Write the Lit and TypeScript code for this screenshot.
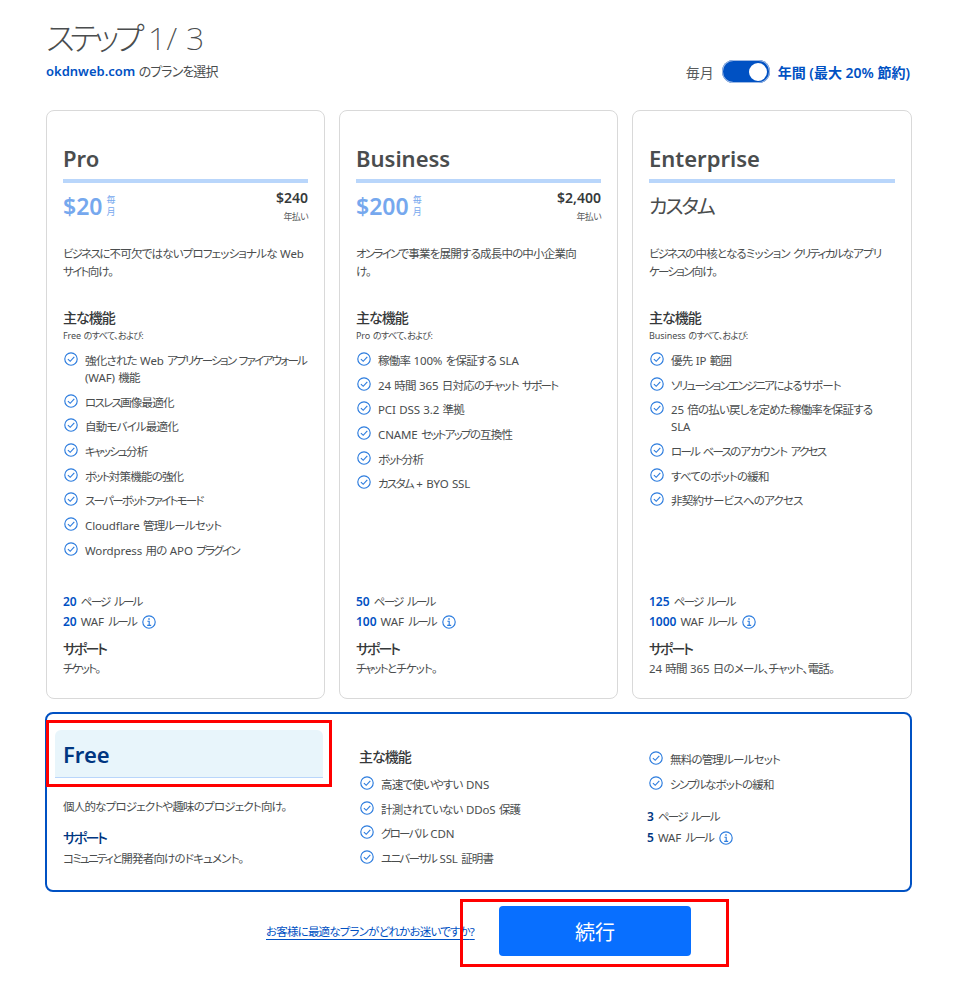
import { LitElement, html, css } from "lit";
import { customElement } from "lit/decorators.js";

const check = html`<svg class="ic" viewBox="0 0 14 14" fill="none" stroke="#2c7cde" stroke-width="1.15"><circle cx="7" cy="7" r="6.2"/><path d="M3.9 7.1 L6.2 9.3 L10.3 4.9"/></svg>`;
const info = html`<svg class="info" viewBox="0 0 14 14" fill="none" stroke="#2c7cde" stroke-width="1.15"><circle cx="7" cy="7" r="6.2"/><path d="M5.4 6.2H7.2V10.4M5.2 10.4H9.2"/><path d="M7 3.2V4.8" stroke-width="1.5"/></svg>`;

/** Wraps katakana and other CJK runs so each can take its own tracking. */
function jp(text: string) {
  const parts = text.match(/[ァ-ヶー]+|[\u3000-\u30ff\u4e00-\u9fff]+|[^\u3000-\u30ff\u4e00-\u9fff]+/g) ?? [];
  return parts.map((p) => {
    if (/^[ァ-ヶー]/.test(p)) return html`<span class="k">${p}</span>`;
    if (/^[\u3000-\u30ff\u4e00-\u9fff]/.test(p)) return html`<span class="c">${p}</span>`;
    return html`<span class="l">${p}</span>`;
  });
}

interface Plan { name: string; price?: string; year?: string; custom?: string; desc: string; from: string; feats: string[]; r1: string; r2: string; support: string; }

const plans: Plan[] = [
  { name: "Pro", price: "$20", year: "$240", desc: "ビジネスに不可欠ではないプロフェッショナルな Web サイト向け。", from: "Free のすべて、および:",
    feats: ["強化された Web アプリケーション ファイアウォール\n(WAF) 機能", "ロスレス画像最適化", "自動モバイル最適化", "キャッシュ分析", "ボット対策機能の強化", "スーパーボットファイトモード", "Cloudflare 管理ルールセット", "Wordpress 用の APO プラグイン"],
    r1: "20", r2: "20", support: "チケット。" },
  { name: "Business", price: "$200", year: "$2,400", desc: "オンラインで事業を展開する成長中の中小企業向\nけ。", from: "Pro のすべて、および:",
    feats: ["稼働率 100% を保証する SLA", "24 時間 365 日対応のチャット サポート", "PCI DSS 3.2 準拠", "CNAME セットアップの互換性", "ボット分析", "カスタム + BYO SSL"],
    r1: "50", r2: "100", support: "チャットとチケット。" },
  { name: "Enterprise", custom: "カスタム", desc: "ビジネスの中核となるミッション クリティカルなアプリ\nケーション向け。", from: "Business のすべて、および:",
    feats: ["優先 IP 範囲", "ソリューションエンジニアによるサポート", "25 倍の払い戻しを定めた稼働率を保証する\nSLA", "ロール ベースのアカウント アクセス", "すべてのボットの緩和", "非契約サービスへのアクセス"],
    r1: "125", r2: "1000", support: "24 時間 365 日のメール、チャット、電話。" },
];

@customElement("app-root")
export class AppRoot extends LitElement {
  static styles = css`
    :host { display: block; height: 989px; position: relative; overflow: hidden; background: #fff; color: #4a4d4e;
      font-family: "Noto Sans", "Noto Sans CJK JP", sans-serif; font-size: 11.5px; font-feature-settings: "palt"; }
    .k { letter-spacing: -0.15em; }
    .c { letter-spacing: -0.07em; }
    .l { letter-spacing: -0.01em; word-spacing: 0.5px; white-space: pre-line; }
    .page { width: 866px; padding: 20px 0 0 46px; }
    .head { display: flex; justify-content: space-between; align-items: flex-end; height: 90px; box-sizing: border-box; }
    .lead { align-self: flex-start; }
    h1 { margin: 0; font-size: 32px; font-weight: 200; line-height: 36px; color: #4a4d4e; }
    h1 .k { letter-spacing: -0.15em; }
    h1 .l { letter-spacing: 0.01em; word-spacing: 0; }
    .sub { font-size: 13px; line-height: 18px; margin-top: 6px; }
    .sub b { color: #0051c3; font-weight: 600; }
    .toggle { display: flex; align-items: center; gap: 8px; font-size: 14px; margin-bottom: 27px; margin-right: 2px; }
    .toggle .c, .toggle .l { letter-spacing: 0; word-spacing: 0; }
    .toggle .off { color: #595b5c; }
    .toggle .on { color: #0051c3; font-weight: 600; }
    .sw { width: 48px; height: 23px; border-radius: 12px; background: #0051c3; box-shadow: 0 0 0 1px #9db9e4 inset; display: flex; justify-content: flex-end; align-items: center; padding-right: 3px; box-sizing: border-box; }
    .sw i { width: 18px; height: 18px; background: #fff; border-radius: 50%; display: block; }
    .cards { display: grid; grid-template-columns: 279px 279px 280px; gap: 14px; }
    .card { height: 589px; box-sizing: border-box; border: 1px solid #d9d9d9; border-radius: 8px; padding: 29px 16px 0; display: flex; flex-direction: column; }
    .name { font-size: 22px; font-weight: 600; line-height: 36px; color: #4a4d4e; height: 39px; border-bottom: 4px solid #b9d6fb; }
    .price { display: flex; justify-content: space-between; height: 62px; padding-top: 3px; box-sizing: border-box; }
    .amt { display: flex; align-items: center; gap: 4px; height: 40px; color: #76a8ee; font-size: 23px; font-weight: 600; }
    .per { font-size: 9px; line-height: 12px; font-weight: 400; width: 9px; }
    .yr { text-align: right; }
    .yr b { display: block; font-size: 14px; font-weight: 600; line-height: 20px; margin-top: 2px; color: #36393a; }
    .yr span { font-size: 9px; line-height: 14px; display: block; color: #595b5c; margin-top: 2px; }
    .custom { font-size: 20px; line-height: 36px; height: 62px; color: #4a4d4e; padding-top: 6px; box-sizing: border-box; }
    .custom .k { letter-spacing: -0.1em; }
    .desc { line-height: 18px; height: 64px; margin: 0; }
    .ttl { font-size: 14px; font-weight: 500; line-height: 18px; color: #36393a; }
    .from { font-size: 9px; line-height: 14px; margin-bottom: 9px; margin-top: 2px; }
    ul { list-style: none; margin: 0; padding: 0; display: flex; flex-direction: column; gap: 7.7px; }
    li { display: flex; gap: 7px; line-height: 17px; color: #4a4d4e; }
    .ic { width: 14px; height: 14px; flex: none; margin: 0 0 0 1px; }
    .info { width: 14px; height: 14px; margin-left: 3px; vertical-align: -3px; }
    .rules { line-height: 20px; color: #4a4d4e; }
    .rules .l { word-spacing: 1.5px; }
    .rules b { color: #0051c3; font-weight: 600; margin-right: 1px; font-size: 12px; }
    .bottom { margin-top: auto; padding-bottom: 20px; }
    .bottom .ttl { margin-top: 8px; }
    .sup { line-height: 18px; margin-top: 2px; }
    .free { width: 867px; margin-left: -1px; margin-top: 13px; height: 180px; box-sizing: border-box; border: 2px solid #0051c3; border-radius: 8px; display: grid; grid-template-columns: 268px 289px 1fr; padding: 16px 8px; }
    .free .hd { height: 48px; background: #e8f5fb; border-bottom: 1px solid #b9d6fb; border-radius: 6px 6px 0 0; font-size: 22px; font-weight: 600; color: #003681; line-height: 48px; padding-left: 8px; box-sizing: border-box; }
    .col1 p { margin: 20px 0 0 8px; line-height: 18px; }
    .col1 .ttl { color: #003681; margin: 13px 0 0 8px; }
    .col1 .sup { margin: 3px 0 0 8px; }
    .col2 { padding: 18px 0 0 36px; }
    .col2 .ttl { margin-bottom: 10px; }
    .col3 { padding: 21px 0 0 36px; }
    .col3 .rules { margin-top: 13px; line-height: 21.5px; }
    .col3 .rules b { color: #003681; margin-right: 1px; }
    .col3 .rules div { margin-left: -1px; }
    .foot { display: flex; align-items: center; margin-top: 14px; padding-left: 220px; gap: 24px; }
    .foot a { width: 209px; white-space: nowrap; color: #0051c3; text-decoration: underline; text-underline-offset: 3px; }
    .btn { width: 192px; height: 50px; border: 0; border-radius: 4px; background: #086fff; color: #fff; font: inherit; font-size: 20px; display: flex; align-items: center; justify-content: center; }
    .mark { position: absolute; border: 3px solid #f00; box-sizing: border-box; pointer-events: none; }
    .m1 { left: 46px; top: 720px; width: 286px; height: 67px; }
    .m2 { left: 460px; top: 899px; width: 269px; height: 68px; }
  `;

  private rule(n: string, label: string) {
    return html`<div><b>${n}</b> ${jp(label)}</div>`;
  }

  render() {
    return html`
      <div class="page">
        <div class="head">
          <div class="lead">
            <h1>${jp("ステップ 1/ 3")}</h1>
            <div class="sub"><b>okdnweb.com</b> ${jp("のプランを選択")}</div>
          </div>
          <div class="toggle"><span class="off">${jp("毎月")}</span><span class="sw"><i></i></span><span class="on">${jp("年間 (最大 20% 節約)")}</span></div>
        </div>
        <div class="cards">
          ${plans.map((p) => html`
            <section class="card">
              <div class="name">${p.name}</div>
              ${p.custom
                ? html`<div class="custom">${jp(p.custom)}</div>`
                : html`<div class="price"><div class="amt">${p.price}<span class="per">毎月</span></div><div class="yr"><b>${p.year}</b><span>${jp("年払い")}</span></div></div>`}
              <p class="desc">${jp(p.desc)}</p>
              <div class="ttl">${jp("主な機能")}</div>
              <div class="from">${jp(p.from)}</div>
              <ul>${p.feats.map((f) => html`<li>${check}<span>${jp(f)}</span></li>`)}</ul>
              <div class="bottom">
                <div class="rules">
                  ${this.rule(p.r1, "ページ ルール")}
                  <div><b>${p.r2}</b> ${jp("WAF ルール")} ${info}</div>
                </div>
                <div class="ttl">${jp("サポート")}</div>
                <div class="sup">${jp(p.support)}</div>
              </div>
            </section>`)}
        </div>
        <section class="free">
          <div class="col1">
            <div class="hd">Free</div>
            <p>${jp("個人的なプロジェクトや趣味のプロジェクト向け。")}</p>
            <div class="ttl">${jp("サポート")}</div>
            <div class="sup">${jp("コミュニティと開発者向けのドキュメント。")}</div>
          </div>
          <div class="col2">
            <div class="ttl">${jp("主な機能")}</div>
            <ul>${["高速で使いやすい DNS", "計測されていない DDoS 保護", "グローバル CDN", "ユニバーサル SSL 証明書"].map((f) => html`<li>${check}<span>${jp(f)}</span></li>`)}</ul>
          </div>
          <div class="col3">
            <ul>${["無料の管理ルールセット", "シンプルなボットの緩和"].map((f) => html`<li>${check}<span>${jp(f)}</span></li>`)}</ul>
            <div class="rules">
              ${this.rule("3", "ページ ルール")}
              <div><b>5</b> ${jp("WAF ルール")} ${info}</div>
            </div>
          </div>
        </section>
        <div class="foot"><a>${jp("お客様に最適なプランがどれかお迷いですか?")}</a><button class="btn">続行</button></div>
      </div>
      <div class="mark m1"></div>
      <div class="mark m2"></div>
    `;
  }
}
